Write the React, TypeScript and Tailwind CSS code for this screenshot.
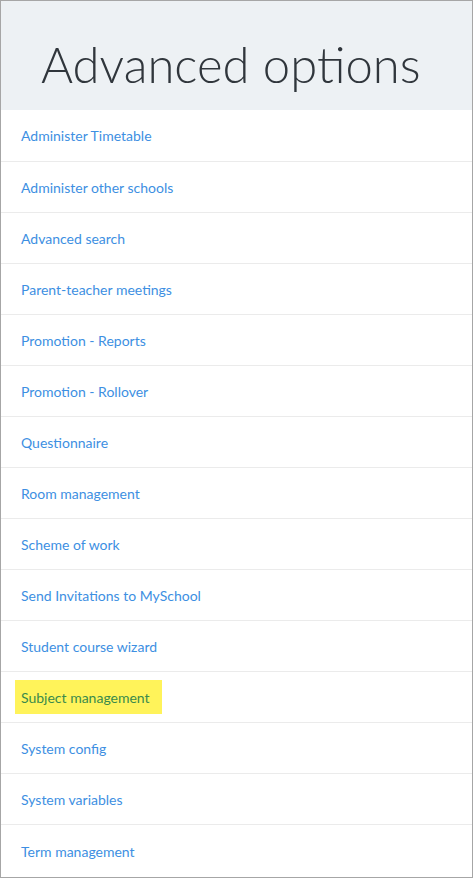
const items = [
  "Administer Timetable",
  "Administer other schools",
  "Advanced search",
  "Parent-teacher meetings",
  "Promotion - Reports",
  "Promotion - Rollover",
  "Questionnaire",
  "Room management",
  "Scheme of work",
  "Send Invitations to MySchool",
  "Student course wizard",
  "Subject management",
  "System config",
  "System variables",
  "Term management",
];

export default function App() {
  return (
    <div className="w-[473px] h-[878px] border border-[#a6a6a6] bg-white flex flex-col font-['Lato',sans-serif]">
      <div className="h-[109px] shrink-0 bg-[#edf1f4] flex items-center pl-[40px] pt-[17px]">
        <h1 className="text-[49px] font-light text-[#30363c] leading-none">
          Advanced options
        </h1>
      </div>
      <ul className="flex-1 flex flex-col">
        {items.map((item, i) => (
          <li
            key={item}
            className={
              "flex items-center pl-[20px] text-[14px] " +
              (i > 0 ? "border-t border-[#ebebeb] " : "") +
              (i === items.length - 1 ? "flex-1" : "h-[51px]")
            }
          >
            {item === "Subject management" ? (
              <span className="bg-[#fff35a] text-[#3a8a4c] px-[6px] -ml-[6px] h-[34px] flex items-center pr-[12px]">
                {item}
              </span>
            ) : (
              <a href="#" className="text-[#3d8fe2]">
                {item}
              </a>
            )}
          </li>
        ))}
      </ul>
    </div>
  );
}
